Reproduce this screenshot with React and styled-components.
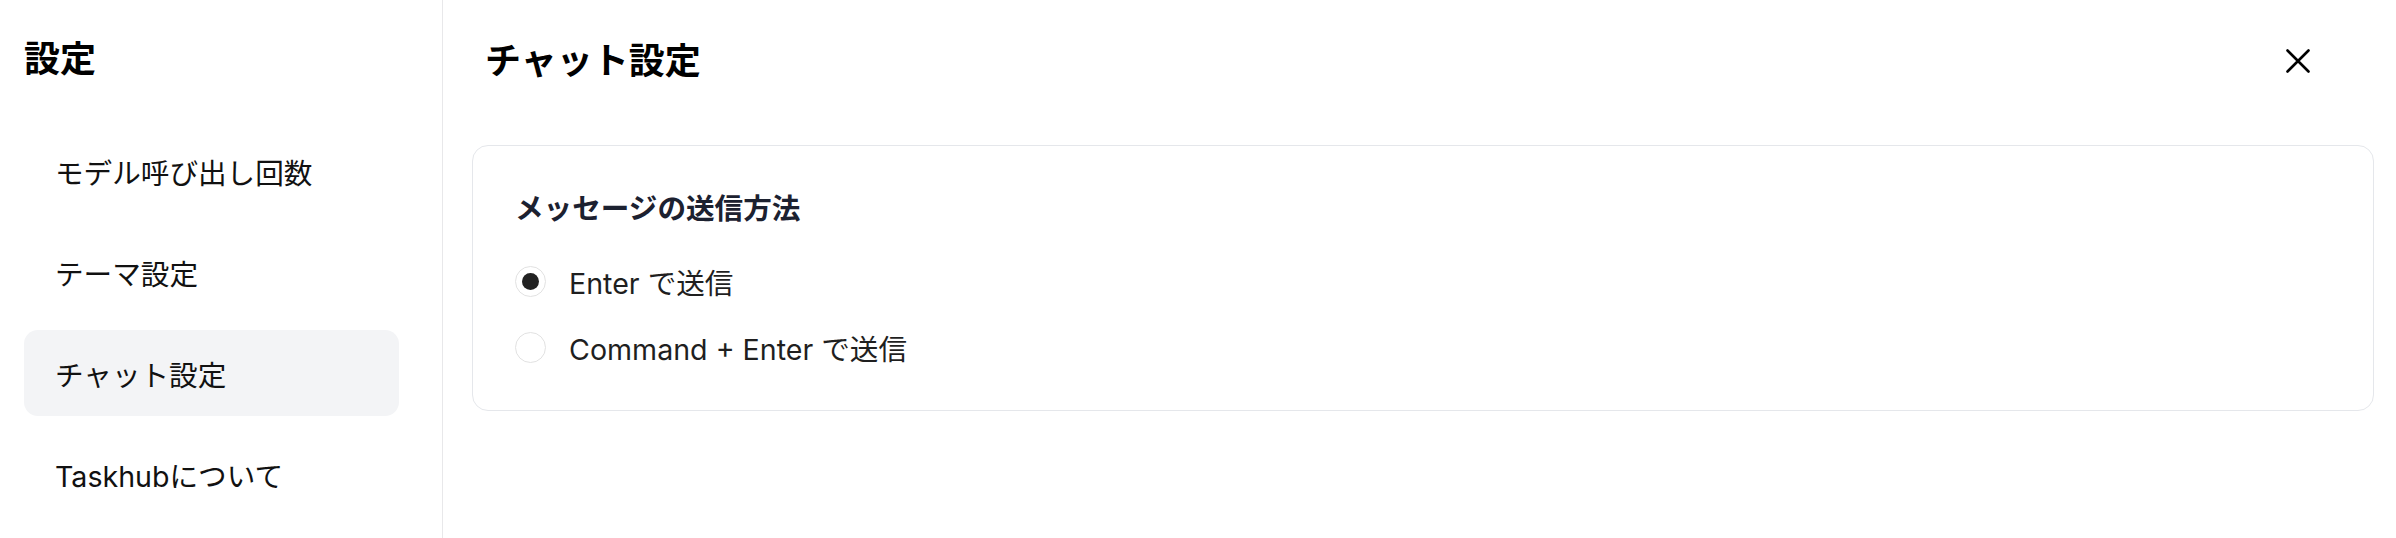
import React, { useState } from "react";
import styled, { createGlobalStyle } from "styled-components";

const GlobalStyle = createGlobalStyle`
	html, body {
		margin: 0;
		padding: 0;
		background: #ffffff;
	}
	body {
		font-family: "Inter", "Noto Sans CJK JP", sans-serif;
		color: #111111;
	}
`;

const StyledPage = styled.div`
	display: flex;
	width: 100%;
	height: 538px;
	background: #ffffff;
`;

const StyledSidebar = styled.aside`
	flex-shrink: 0;
	padding: 0 43px 0 24px;
	box-sizing: border-box;
	width: 443px;
	border-right: 1px solid #e8e8ea;
	display: flex;
	flex-direction: column;
`;

const StyledSideTitle = styled.h1`
	margin: 39px 0 0 0;
	font-size: 36px;
	line-height: 40px;
	font-weight: 700;
	color: #000000;
`;

const StyledMenu = styled.ul`
	list-style: none;
	margin: 49px 0 0 0;
	padding: 0;
	display: flex;
	flex-direction: column;
	gap: 15px;
`;

const StyledMenuItem = styled.li`
	height: 86px;
	display: flex;
	align-items: center;
	padding-left: 31px;
	border-radius: 14px;
	font-size: 28.6px;
	color: #111111;
	background: ${(p) => (p.$active ? "#f3f4f6" : "transparent")};
	cursor: pointer;
`;

const StyledMain = styled.main`
	flex: 1;
	padding: 0 22px 0 29px;
	display: flex;
	flex-direction: column;
`;

const StyledHeader = styled.header`
	display: flex;
	align-items: center;
	justify-content: space-between;
	height: 40px;
	margin-top: 41px;
	padding: 0 56px 0 13px;
`;

const StyledTitle = styled.h2`
	margin: 0;
	font-size: 36px;
	line-height: 40px;
	font-weight: 700;
	color: #000000;
`;

const StyledClose = styled.button`
	width: 40px;
	height: 40px;
	padding: 0;
	border: none;
	background: transparent;
	display: flex;
	align-items: center;
	justify-content: center;
	cursor: pointer;
`;

const StyledCard = styled.section`
	margin-top: 64px;
	border: 1px solid #e5e7eb;
	border-radius: 16px;
	padding: 43px 42px;
	display: flex;
	flex-direction: column;
`;

const StyledCardTitle = styled.h3`
	margin: 0 0 32px 0;
	font-size: 28.6px;
	line-height: 40px;
	font-weight: 600;
	color: #1c2130;
`;

const StyledOptions = styled.div`
	display: flex;
	flex-direction: column;
	gap: 26px;
`;

const StyledOption = styled.label`
	display: flex;
	align-items: center;
	gap: 23px;
	height: 40px;
	font-size: 28.6px;
	color: #1f1f1f;
	cursor: pointer;
`;

const StyledRadio = styled.span`
	width: 31px;
	height: 31px;
	box-sizing: border-box;
	border-radius: 50%;
	border: 1.5px solid #e2e2e2;
	background: #ffffff;
	display: flex;
	align-items: center;
	justify-content: center;

	&::after {
		content: "";
		width: 17px;
		height: 17px;
		border-radius: 50%;
		background: ${(p) => (p.$checked ? "#222222" : "transparent")};
	}
`;

const menu = ["モデル呼び出し回数", "テーマ設定", "チャット設定", "Taskhubについて"];
const options = ["Enter で送信", "Command + Enter で送信"];

const App = () => {
	const [selected, setSelected] = useState(0);

	return (
		<>
			<GlobalStyle />
			<StyledPage>
				<StyledSidebar>
					<StyledSideTitle>設定</StyledSideTitle>
					<StyledMenu>
						{menu.map((item) => (
							<StyledMenuItem key={item} $active={item === "チャット設定"}>
								{item}
							</StyledMenuItem>
						))}
					</StyledMenu>
				</StyledSidebar>

				<StyledMain>
					<StyledHeader>
						<StyledTitle>チャット設定</StyledTitle>
						<StyledClose aria-label="閉じる">
							<svg width="24" height="24" viewBox="0 0 24 24" fill="none">
								<path
									d="M1.5 1.5L22.5 22.5M22.5 1.5L1.5 22.5"
									stroke="#000"
									strokeWidth="2.6"
									strokeLinecap="round"
								/>
							</svg>
						</StyledClose>
					</StyledHeader>

					<StyledCard>
						<StyledCardTitle>メッセージの送信方法</StyledCardTitle>
						<StyledOptions>
							{options.map((opt, i) => (
								<StyledOption key={opt} onClick={() => setSelected(i)}>
									<StyledRadio $checked={selected === i} />
									{opt}
								</StyledOption>
							))}
						</StyledOptions>
					</StyledCard>
				</StyledMain>
			</StyledPage>
		</>
	);
};

export default App;
